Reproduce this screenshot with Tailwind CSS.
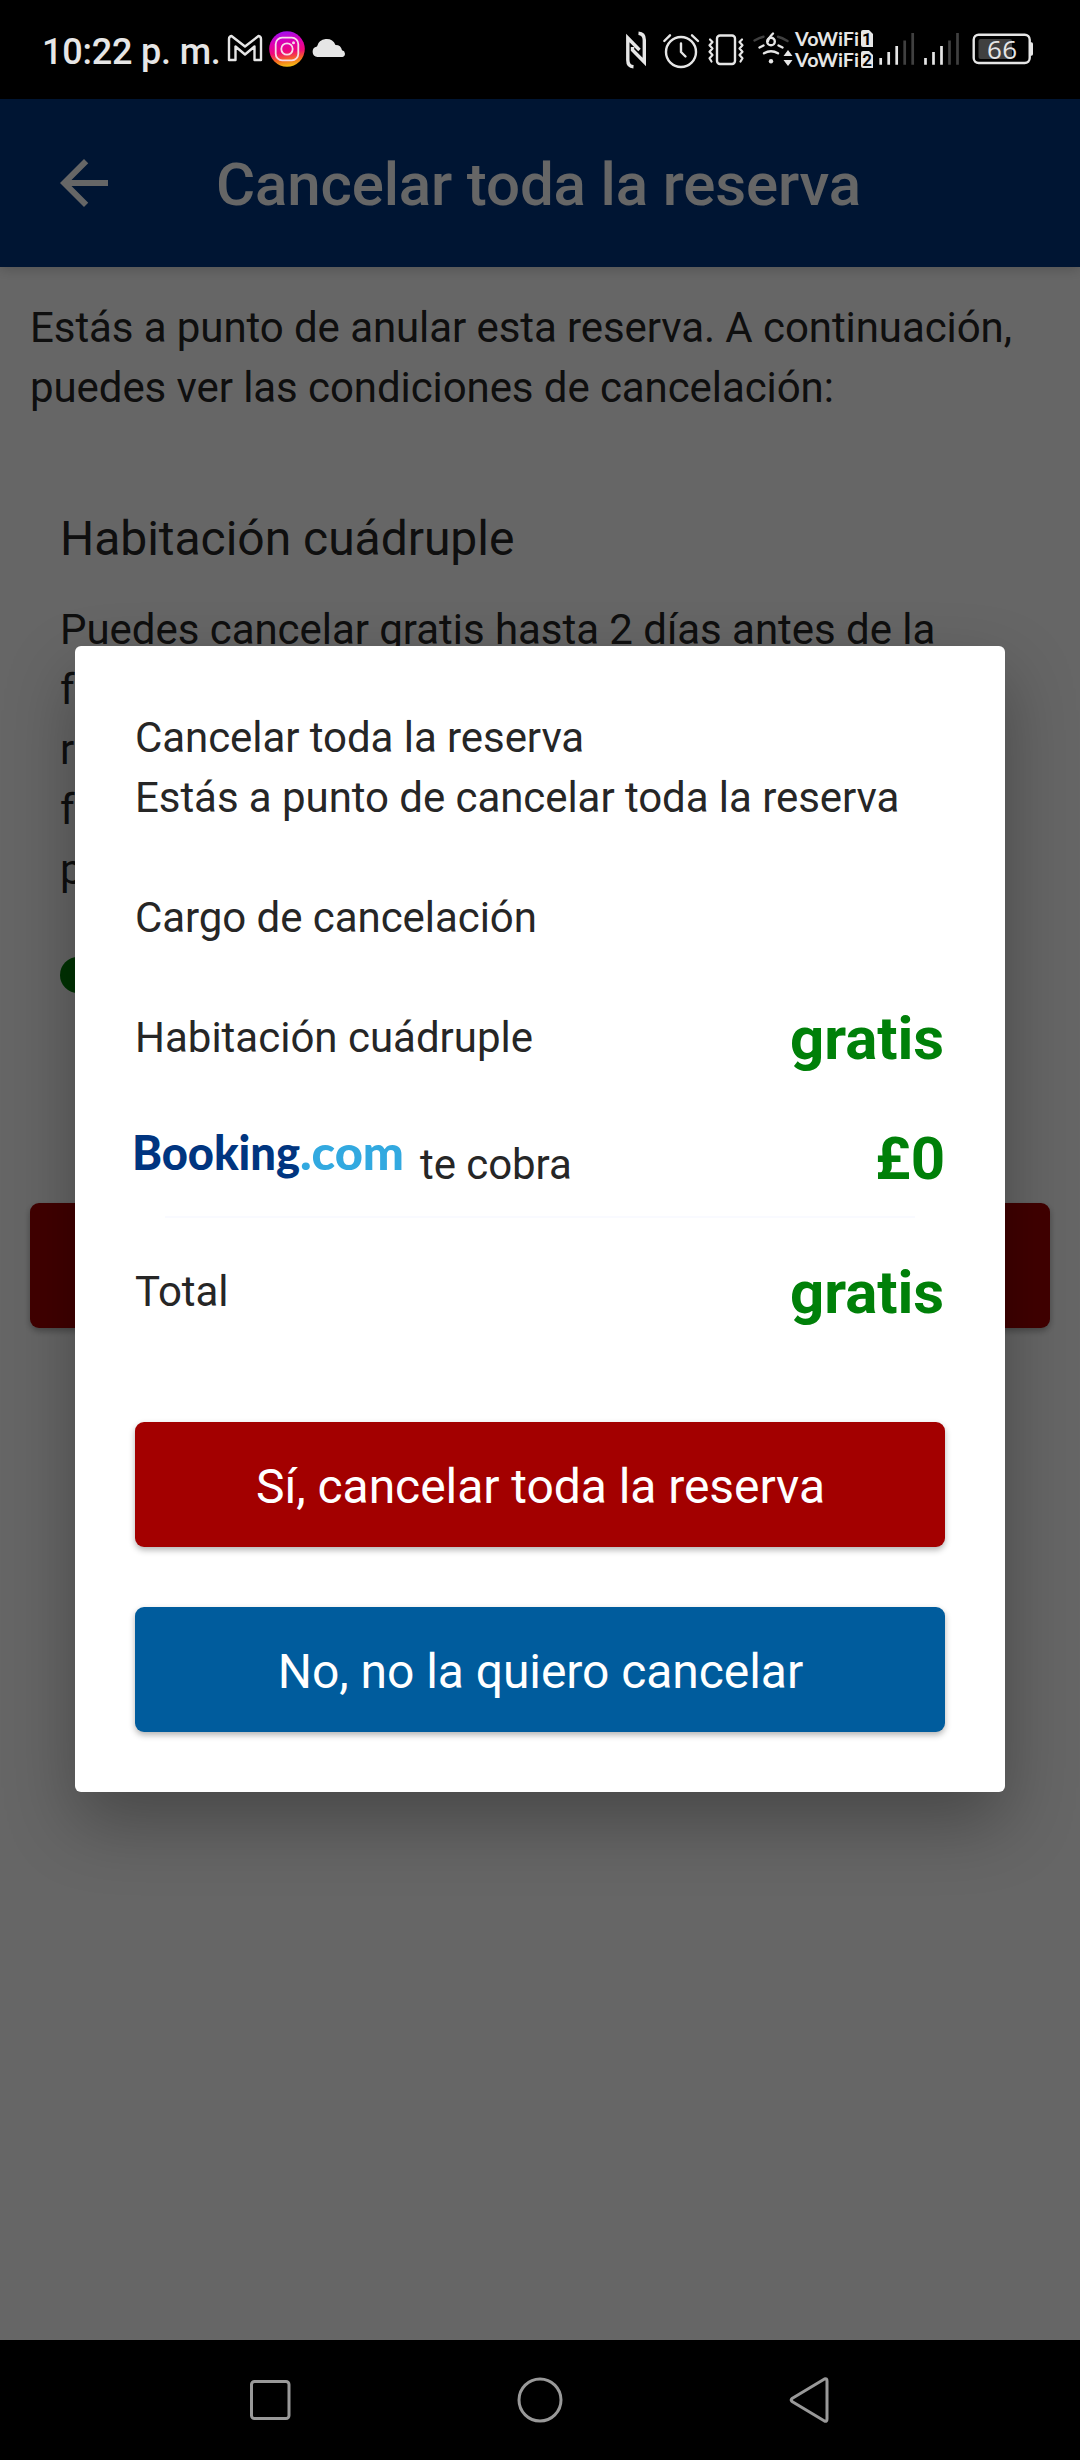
<!DOCTYPE html>
<html lang="es">
<head>
    <meta charset="UTF-8">
    <meta name="viewport" content="width=device-width, initial-scale=1.0">
    <title>Cancelar toda la reserva</title>
    <script src="https://cdn.jsdelivr.net/npm/@tailwindcss/browser@4"></script>
</head>
<body class="relative flex flex-col w-[1080px] h-[2460px] overflow-hidden bg-white text-[#262626] font-['Roboto',sans-serif]">

    <!-- Status bar -->
    <div class="flex items-start justify-between h-[99px] shrink-0 bg-black text-[#e6e6e6] pl-[42px] pr-[46px]">
        <div class="flex items-start">
            <span class="w-[185px] pt-[31px] text-[36px] leading-[42px] font-medium tracking-[-0.2px] whitespace-nowrap">10:22 p. m.</span>
            <!-- Gmail -->
            <svg class="w-[36px] h-[40px] mt-[30px]" viewBox="227 30 36 40" fill="none" stroke="#e6e6e6" stroke-width="2.400" stroke-linejoin="round">
                <path d="M229 39q0-2.500 2.500-3L245 46.500 258.500 36q2.500 .5 2.500 3V60h-6.500V46.500L245 54.500 235.500 46.500V60H229Z"/>
            </svg>
            <!-- Instagram -->
            <svg class="w-[36px] h-[36px] mt-[31px] ml-[6px]" viewBox="0 0 36 36" fill="none">
                <defs>
                    <linearGradient id="ig" x1="0.4" y1="0" x2="0.55" y2="1">
                        <stop offset="0" stop-color="#a010f0"/>
                        <stop offset="0.3" stop-color="#dc00b4"/>
                        <stop offset="0.58" stop-color="#f0087a"/>
                        <stop offset="0.8" stop-color="#f66a20"/>
                        <stop offset="1" stop-color="#f2c414"/>
                    </linearGradient>
                </defs>
                <circle cx="18" cy="18" r="17.800" fill="url(#ig)"/>
                <g stroke="#f6dcea" stroke-width="1.800">
                    <rect x="6.700" y="6.700" width="22.600" height="22.600" rx="6.500"/>
                    <circle cx="18" cy="18" r="5.700"/>
                </g>
                <circle cx="24.500" cy="11.800" r="1.500" fill="#f6dcea"/>
            </svg>
            <!-- Cloud -->
            <svg class="w-[34px] h-[20px] mt-[38px] ml-[7px]" viewBox="0 0 34 20" fill="#e6e6e6">
                <path d="M5.500 19a5.300 5.300 0 0 1-.5-10.500A9.800 9.800 0 0 1 23.500 7a6.500 6.500 0 0 1 6.500 5.200A3.500 3.500 0 0 1 30.500 19Z"/>
            </svg>
        </div>
        <!-- NFC, alarm, vibration, wifi, VoWiFi, signal and battery -->
        <svg class="w-[410px] h-[50px] mt-[25px]" viewBox="624 25 410 50" fill="none">
            <path d="M633.500 66.800Q627.800 66.500 627.800 60V38L639.500 50M638.500 33.200Q644.300 33.500 644.300 40V62L632.500 50V47" stroke="#e6e6e6" stroke-width="3.400"/>
            <g stroke="#e6e6e6" stroke-width="2.400" stroke-linecap="round" stroke-linejoin="round">
                <circle cx="681" cy="52" r="15"/>
                <path d="M681 43.500V52l4.500 4.500"/>
                <path d="M664.300 41 670 35.300M692 35.300 698 41"/>
                <rect x="717" y="35.500" width="18" height="28.500" rx="3"/>
                <path stroke-width="2.200" d="M710 39.500 712.500 42 709.500 45.300 712.500 48.500 709.500 51.700 712.500 55 709.500 58.200 711.500 61.500M742 39.500 739.500 42 742.500 45.300 739.500 48.500 742.500 51.700 739.500 55 742.500 58.200 740.500 61.500"/>
                <path d="M764 53.300q7-4 14 0M759.500 47.500 763.500 45.500M778.500 45.500 782.500 47.500"/>
                <path d="M773 33.500Q768.500 38 768 41"/>
                <circle cx="771" cy="41.500" r="3.800"/>
            </g>
            <path d="M754.500 40.500q5-3 9-3.800M778 36.700q4 .8 9.500 4.300" stroke="#404040" stroke-width="2.400" stroke-linecap="round"/>
            <circle cx="771" cy="61.300" r="2.200" fill="#e6e6e6"/>
            <path d="M788 50 792.500 56H783.500ZM788 66 792.500 60H783.500Z" fill="#e6e6e6"/>
            <g class="font-['Lato',sans-serif] text-[18px] font-bold" fill="#e6e6e6">
                <text x="795" y="46" textLength="64" lengthAdjust="spacingAndGlyphs">VoWiFi</text>
                <text x="795" y="67" textLength="64" lengthAdjust="spacingAndGlyphs">VoWiFi</text>
            </g>
            <path d="M863 30H869L873 34V47H863Q861 47 861 45V32Q861 30 863 30ZM863 51H869L873 55V68H863Q861 68 861 66V53Q861 51 863 51Z" fill="#e6e6e6"/>
            <g class="font-['Roboto',sans-serif] text-[17px] font-bold" fill="#000">
                <text x="862" y="45">1</text>
                <text x="862.300" y="66">2</text>
            </g>
            <g stroke="#e6e6e6" stroke-width="2.700">
                <path d="M880.700 58V64.700M888.700 52V64.700M896.700 46V64.700M925.500 58V64.700M933.500 52V64.700M941.500 46V64.700"/>
                <path stroke="#404040" d="M904.700 40.500V64.700M912.700 33V64.700M949.500 40.500V64.700M957.500 33V64.700"/>
            </g>
            <rect x="978.500" y="39" width="33.500" height="20" rx="2" fill="#404040"/>
            <rect x="973.700" y="34.700" width="56" height="28.300" rx="5" stroke="#e6e6e6" stroke-width="2.400"/>
            <path d="M1030 42.300H1031.500Q1033 42.300 1033 44V54Q1033 55.700 1031.500 55.700H1030Z" fill="#e6e6e6"/>
            <text class="font-['Open_Sans',sans-serif] text-[26px]" x="987" y="59" textLength="30" fill="#e6e6e6">66</text>
        </svg>
    </div>

    <!-- Page behind the dialog -->
    <div class="relative h-[2241px] shrink-0 overflow-hidden">
        <header class="flex items-center h-[168px] bg-[#003580] text-white pl-12 shadow-[0_2px_12px_rgba(0,0,0,0.2)]">
            <svg class="w-[72px] h-[72px]" viewBox="0 0 24 24" fill="currentColor">
                <path d="M20 11H7.830l5.590-5.590L12 4l-8 8 8 8 1.410-1.410L7.830 13H20z"/>
            </svg>
            <h1 class="ml-24 pt-1 text-[60px] leading-[72px] font-medium tracking-[-0.14px]">Cancelar toda la reserva</h1>
        </header>
        <main class="px-[30px] pt-[31px] text-[42px] leading-[60px] tracking-[-0.08px]">
            <p>Estás a punto de anular esta reserva. A continuación,<br>puedes ver las condiciones de cancelación:</p>
            <section class="px-[30px] pt-[91px]">
                <h2 class="text-[48px] leading-[60px] tracking-[-0.03px]">Habitación cuádruple</h2>
                <p class="mt-[31px] tracking-[-0.04px]">Puedes cancelar gratis hasta 2 días antes de la<br>f<br>r<br>f<br>p</p>
                <div class="w-9 h-9 mt-[57px] rounded-full bg-[#008009]"></div>
            </section>
            <div class="h-[125px] mt-[210px] rounded-[9px] bg-[#a30000] shadow-[0_3px_6px_rgba(0,0,0,0.3)]"></div>
        </main>
        <div class="absolute inset-0 bg-black/60"></div>

        <!-- Dialog -->
        <div class="absolute left-[75px] top-[547px] w-[930px] h-[1146px] rounded-[6px] bg-white px-[60px] pt-[62px] text-[42px] leading-[60px] tracking-[-0.06px] shadow-[0_30px_70px_rgba(0,0,0,0.3)]">
            <p>Cancelar toda la reserva</p>
            <p>Estás a punto de cancelar toda la reserva</p>
            <p class="mt-[60px]">Cargo de cancelación</p>
            <div class="flex justify-between mt-[60px]">
                <span class="tracking-normal">Habitación cuádruple</span>
                <span class="mr-px pt-px text-[60px] font-bold text-[#008009]">gratis</span>
            </div>
            <div class="flex items-baseline justify-between h-[60px] mt-[60px]">
                <div class="flex items-baseline">
                    <svg class="w-[276px] h-[62px] -ml-[4px] -mt-[8px] self-start" viewBox="-4 -4 276 62">
                        <g class="font-['Lato',sans-serif] text-[48px] font-black">
                            <text x="-3" y="38.500" textLength="168" lengthAdjust="spacingAndGlyphs" fill="#003580">Booking</text>
                            <text x="165" y="38.500" textLength="104" lengthAdjust="spacingAndGlyphs" fill="#32a9e0">.com</text>
                        </g>
                    </svg>
                    <span class="ml-[13px]">te cobra</span>
                </div>
                <span class="text-[60px] font-bold text-[#008009]">£0</span>
            </div>
            <div class="h-[2px] mx-[30px] mt-[27px] bg-[#f9faff]"></div>
            <div class="flex justify-between h-[60px] mt-[44px]">
                <span>Total</span>
                <span class="mr-px pt-px text-[60px] font-bold text-[#008009]">gratis</span>
            </div>
            <button class="block w-full h-[125px] mt-[100px] pt-1 pl-px rounded-[9px] bg-[#a30000] text-white text-[48px] shadow-[0_3px_6px_rgba(0,0,0,0.3)]">Sí, cancelar toda la reserva</button>
            <button class="block w-full h-[125px] mt-[60px] pt-1 pl-px rounded-[9px] bg-[#005c9d] text-white text-[48px] shadow-[0_3px_6px_rgba(0,0,0,0.3)]">No, no la quiero cancelar</button>
        </div>
    </div>

    <!-- Navigation bar -->
    <nav class="flex items-center justify-between h-[120px] shrink-0 px-[246px] bg-black">
        <svg class="w-[48px] h-[48px]" viewBox="0 0 48 48" fill="none" stroke="#999" stroke-width="3">
            <rect x="5.500" y="5.500" width="37.500" height="37" rx="3"/>
        </svg>
        <svg class="w-[48px] h-[48px]" viewBox="0 0 48 48" fill="none" stroke="#999" stroke-width="3">
            <circle cx="24" cy="24" r="21"/>
        </svg>
        <svg class="w-[48px] h-[48px]" viewBox="0 0 48 48" fill="none" stroke="#999" stroke-width="3" stroke-linejoin="round">
            <path d="M38.500 3Q41 2 41 5V43Q41 46 38.500 45L6 25.500Q4.500 24 6 22.500Z"/>
        </svg>
    </nav>

</body>
</html>
